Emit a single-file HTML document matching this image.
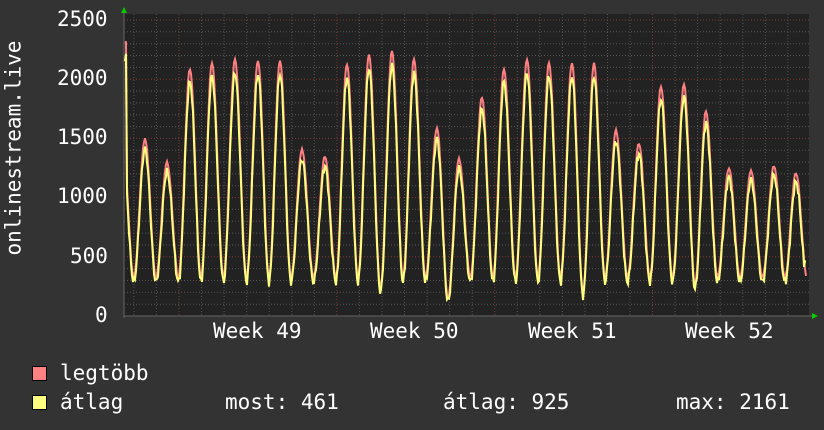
<!DOCTYPE html>
<html><head><meta charset="utf-8"><style>
html,body{margin:0;padding:0;background:#333;}
body{width:824px;height:430px;overflow:hidden;position:relative;font-family:"DejaVu Sans Mono","Liberation Mono",monospace;color:#fff;}
.t{position:absolute;font-size:21px;line-height:21px;white-space:pre;}
.sq{position:absolute;width:13px;height:13px;border:1px solid #000;}
</style></head><body>
<svg id="g" width="824" height="430" style="position:absolute;left:0;top:0"></svg>
<div class="t" style="left:57px;top:9px">2500</div>
<div class="t" style="left:57px;top:68px">2000</div>
<div class="t" style="left:57px;top:127px">1500</div>
<div class="t" style="left:57px;top:186px">1000</div>
<div class="t" style="left:70px;top:246px">500</div>
<div class="t" style="left:95px;top:305px">0</div>
<div class="t" style="left:-76px;top:155px;transform:rotate(-90deg);width:180px;text-align:center">onlinestream.live</div>
<div class="t" style="left:213px;top:321px">Week 49</div>
<div class="t" style="left:370px;top:321px">Week 50</div>
<div class="t" style="left:528px;top:321px">Week 51</div>
<div class="t" style="left:685px;top:321px">Week 52</div>
<div class="sq" style="left:32px;top:366px;background:#ff8080"></div>
<div class="sq" style="left:32px;top:395px;background:#ffff80"></div>
<div class="t" style="left:60px;top:363px">legtöbb</div>
<div class="t" style="left:60px;top:392px">átlag</div>
<div class="t" style="left:225px;top:392px">most: 461</div>
<div class="t" style="left:443px;top:392px">átlag: 925</div>
<div class="t" style="left:676px;top:392px">max: 2161</div>
<script>
var s='';
var L=124,R=809,B=316,T=14,k=0.1184;
s+='<rect x="'+L+'" y="'+T+'" width="'+(R-L)+'" height="'+(B-T)+'" fill="#222"/>';
for(var v=100;v<=2500;v+=100){var y=(B-v*k).toFixed(1);s+='<line x1="'+L+'" x2="'+R+'" y1="'+y+'" y2="'+y+'" stroke="'+(v%500?'#555':'#7a3a3a')+'" stroke-dasharray="1,2"/>';}
for(var i=-2;i<=29;i++){var x=179+i*22.55;if(x<=L||x>=R)continue;s+='<line x1="'+x.toFixed(1)+'" x2="'+x.toFixed(1)+'" y1="'+T+'" y2="'+B+'" stroke="'+(i%7==0?'#7a3a3a':'#555')+'" stroke-dasharray="1,2"/>';}
s+='<line x1="'+L+'" x2="'+(R+4)+'" y1="'+B+'" y2="'+B+'" stroke="#666"/>';
s+='<line x1="'+L+'" x2="'+L+'" y1="'+(T-4)+'" y2="'+(B+2)+'" stroke="#666"/>';
s+='<polygon points="121,13 127,13 124,7" fill="#0c0"/><polygon points="812,313 812,319 818,316" fill="#0c0"/>';
var pk=[[145,1490],[167,1290],[190,2080],[212,2130],[235,2160],[258,2150],[280,2150],[302,1400],[325,1340],[347,2120],[369,2200],[392,2230],[414,2160],[437,1580],[459,1320],[482,1840],[504,2080],[527,2160],[549,2130],[572,2130],[594,2130],[616,1560],[639,1450],[661,1930],[684,1950],[706,1720],[729,1240],[751,1220],[774,1260],[796,1200],[818,1100]];
var mins={448:150,585:200,383:230,700:260};
function val(x){
 var j=0;while(j<pk.length-1&&pk[j+1][0]<x)j++;
 var p0=pk[j],p1=pk[j+1]||pk[j];
 if(x<pk[0][0]){p1=pk[0];p0=[p1[0]-22.5,1500];}
 var d=p1[0]-p0[0];var t=(x-p0[0])/d;
 var tx=p0[0]+d*0.5,mn=320;
 for(var m in mins){if(Math.abs(m-tx)<8)mn=mins[m];}
 var h,v,u;
 if(t<0.5){u=t/0.5;h=Math.pow((1+Math.cos(Math.PI*u))/2,1.0);v=mn+(p0[1]-mn)*h;}
 else{u=(1-t)/0.5;h=Math.pow((1+Math.cos(Math.PI*u))/2,1.0);v=mn+(p1[1]-mn)*h;}
 return v;
}
var mx=[],av=[];
for(var x=125;x<=806;x+=1){
 var v=val(x);if(x<127)v=2300;
 var n=Math.sin(x*1.7)*25+Math.sin(x*3.1)*15;
 var a=v*0.96+n-20;var m=v+Math.abs(n)*0.5;
 if(x>=805)a=461;
 mx.push(x+','+(B-m*k).toFixed(1));av.push(x+','+(B-a*k).toFixed(1));
}
s+='<polyline points="'+mx.join(' ')+'" fill="none" stroke="#ff8080" stroke-width="2"/>';
s+='<polyline points="'+av.join(' ')+'" fill="none" stroke="#ffff80" stroke-width="2"/>';
document.getElementById('g').innerHTML=s;
</script>
</body></html>
